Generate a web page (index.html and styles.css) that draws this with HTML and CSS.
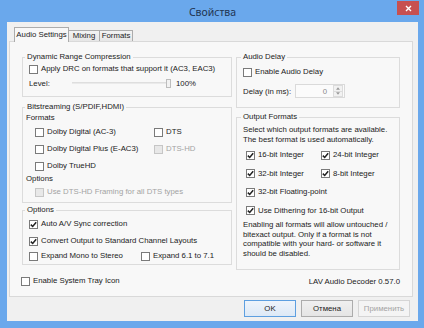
FILE: index.html
```html
<!DOCTYPE html>
<html>
<head>
<meta charset="utf-8">
<link rel="stylesheet" href="styles.css">
</head>
<body>
<div class="window">
  <div class="titlebar">
    <span class="title">Свойства</span>
    <span class="close"><svg viewBox="0 0 7 7" width="7" height="7"><path d="M1 1L6 6M6 1L1 6" stroke="#fff" stroke-width="1.4"/></svg></span>
  </div>
  <div class="client">
    <div class="tabs">
      <div class="tab active">Audio Settings</div>
      <div class="tab">Mixing</div>
      <div class="tab last">Formats</div>
    </div>
    <div class="panel">
      <div class="col">
        <div class="group drc">
          <div class="gtitle">Dynamic Range Compression</div>
          <div class="body">
            <div class="cb"><span class="box"></span><span>Apply DRC on formats that support it (AC3, EAC3)</span></div>
            <div class="level">
              <span class="level-label">Level:</span>
              <span class="slider"><span class="track"></span><span class="thumb"></span></span>
              <span class="pct">100%</span>
            </div>
          </div>
        </div>
        <div class="group bits">
          <div class="gtitle">Bitstreaming (S/PDIF,HDMI)</div>
          <div class="body">
            <div class="sub">Formats</div>
            <div class="fmt-grid">
              <div class="cb"><span class="box"></span><span>Dolby Digital (AC-3)</span></div>
              <div class="cb"><span class="box"></span><span>DTS</span></div>
              <div class="cb"><span class="box"></span><span>Dolby Digital Plus (E-AC3)</span></div>
              <div class="cb disabled"><span class="box"></span><span>DTS-HD</span></div>
              <div class="cb"><span class="box"></span><span>Dolby TrueHD</span></div>
            </div>
            <div class="sub sub-opt">Options</div>
            <div class="cb disabled framing"><span class="box"></span><span>Use DTS-HD Framing for all DTS types</span></div>
          </div>
        </div>
        <div class="group opts">
          <div class="gtitle">Options</div>
          <div class="body">
            <div class="cb"><span class="box on"><svg viewBox="0 0 7 7"><path d="M0.8 3.6L2.7 5.5L6.2 1.2" fill="none" stroke="#222" stroke-width="1.5"/></svg></span><span>Auto A/V Sync correction</span></div>
            <div class="cb convert"><span class="box on"><svg viewBox="0 0 7 7"><path d="M0.8 3.6L2.7 5.5L6.2 1.2" fill="none" stroke="#222" stroke-width="1.5"/></svg></span><span>Convert Output to Standard Channel Layouts</span></div>
            <div class="expand-row">
              <div class="cb"><span class="box"></span><span>Expand Mono to Stereo</span></div>
              <div class="cb"><span class="box"></span><span>Expand 6.1 to 7.1</span></div>
            </div>
          </div>
        </div>
      </div>
      <div class="col">
        <div class="group delay">
          <div class="gtitle">Audio Delay</div>
          <div class="body">
            <div class="cb"><span class="box"></span><span>Enable Audio Delay</span></div>
            <div class="delay-row">
              <span class="delay-label">Delay (in ms):</span>
              <span class="spin"><span class="spin-val">0</span><span class="spin-btns"><span class="spin-btn"><svg viewBox="0 0 5 3" width="5" height="3"><path d="M0 3L2.5 0L5 3Z" fill="#9a9a9a"/></svg></span><span class="spin-btn"><svg viewBox="0 0 5 3" width="5" height="3"><path d="M0 0L2.5 3L5 0Z" fill="#9a9a9a"/></svg></span></span></span>
            </div>
          </div>
        </div>
        <div class="group outfmt">
          <div class="gtitle">Output Formats</div>
          <div class="body">
            <div class="text">Select which output formats are available.<br>The best format is used automatically.</div>
            <div class="out-grid">
              <div class="cb"><span class="box on"><svg viewBox="0 0 7 7"><path d="M0.8 3.6L2.7 5.5L6.2 1.2" fill="none" stroke="#222" stroke-width="1.5"/></svg></span><span>16-bit Integer</span></div>
              <div class="cb"><span class="box on"><svg viewBox="0 0 7 7"><path d="M0.8 3.6L2.7 5.5L6.2 1.2" fill="none" stroke="#222" stroke-width="1.5"/></svg></span><span>24-bit Integer</span></div>
              <div class="cb"><span class="box on"><svg viewBox="0 0 7 7"><path d="M0.8 3.6L2.7 5.5L6.2 1.2" fill="none" stroke="#222" stroke-width="1.5"/></svg></span><span>32-bit Integer</span></div>
              <div class="cb"><span class="box on"><svg viewBox="0 0 7 7"><path d="M0.8 3.6L2.7 5.5L6.2 1.2" fill="none" stroke="#222" stroke-width="1.5"/></svg></span><span>8-bit Integer</span></div>
              <div class="cb"><span class="box on"><svg viewBox="0 0 7 7"><path d="M0.8 3.6L2.7 5.5L6.2 1.2" fill="none" stroke="#222" stroke-width="1.5"/></svg></span><span>32-bit Floating-point</span></div>
              <div class="cb span2"><span class="box on"><svg viewBox="0 0 7 7"><path d="M0.8 3.6L2.7 5.5L6.2 1.2" fill="none" stroke="#222" stroke-width="1.5"/></svg></span><span>Use Dithering for 16-bit Output</span></div>
            </div>
            <div class="text note">Enabling all formats will allow untouched /<br>bitexact output. Only if a format is not<br>compatible with your hard- or software it<br>should be disabled.</div>
          </div>
        </div>
      </div>
      <div class="bottom-row">
        <div class="cb tray"><span class="box"></span><span>Enable System Tray Icon</span></div>
        <span class="version">LAV Audio Decoder 0.57.0</span>
      </div>
    </div>
    <div class="buttons">
      <span class="btn default">OK</span>
      <span class="btn">Отмена</span>
      <span class="btn disabled">Применить</span>
    </div>
  </div>
</div>
</body>
</html>
```
FILE: styles.css
```css
* { box-sizing: border-box; }
html, body { margin: 0; padding: 0; }
body {
  width: 424px;
  height: 328px;
  overflow: hidden;
  font-family: "Liberation Sans", Arial, sans-serif;
  font-size: 7.8px;
  color: #222;
}
.window {
  width: 424px;
  height: 328px;
  background: #6aa8ec;
  padding: 0 6px 7px 7px;
  display: flex;
  flex-direction: column;
}
.titlebar {
  height: 22px;
  flex: none;
  display: grid;
  grid-template-columns: 1fr auto 1fr;
  align-items: start;
}
.title {
  grid-column: 2;
  font-family: "Noto Sans", "Open Sans", sans-serif;
  font-size: 10.5px;
  line-height: 14px;
  margin-top: 5px;
  color: #1f3552;
}
.close {
  grid-column: 3;
  justify-self: end;
  width: 22px;
  height: 14px;
  margin-top: 1px;
  margin-right: -1px;
  background: #c75050;
  display: flex;
  align-items: center;
  justify-content: center;
}
.client {
  flex: 1;
  background: #f0f0f0;
  padding: 5px 5px 0 2px;
  display: flex;
  flex-direction: column;
}
.tabs {
  display: flex;
  align-items: flex-end;
  height: 14px;
  margin-left: 5px;
}
.tab {
  height: 11px;
  line-height: 10px;
  border: 1px solid #acacac;
  border-bottom: none;
  border-left: none;
  background: linear-gradient(#f3f3f3, #e6e6e6);
  text-align: center;
}
.tab:nth-child(2) { width: 31px; }
.tab.last { width: 33px; }
.tab.active {
  width: 55px;
  height: 15px;
  margin-bottom: -1px;
  border-left: 1px solid #acacac;
  background: #f8f8f8;
  padding-top: 2px;
  position: relative;
  z-index: 1;
}
.panel {
  height: 256px;
  flex: none;
  background: #f8f8f8;
  border: 1px solid #d9d9d9;
  padding: 15px 12px 0 12px;
  display: grid;
  grid-template-columns: 210px 164px;
  column-gap: 4px;
  align-content: start;
}
.col {
  display: flex;
  flex-direction: column;
}
.group {
  border: 1px solid #dcdcdc;
}
.gtitle {
  width: fit-content;
  margin: -6px 0 0 2px;
  padding: 0 2px;
  height: 10px;
  line-height: 10px;
  background: #f8f8f8;
}
.delay .gtitle, .outfmt .gtitle { margin-left: 4px; }
.cb {
  display: flex;
  align-items: center;
  height: 10px;
  line-height: 10px;
  white-space: nowrap;
}
.box {
  width: 9px;
  height: 9px;
  flex: none;
  border: 1px solid #7a7a7a;
  background: #fff;
  margin-right: 3px;
  display: flex;
  align-items: center;
  justify-content: center;
}
.box svg { width: 7px; height: 7px; display: block; }
.cb.disabled { color: #a3a3a3; }
.cb.disabled .box { border-color: #c6c6c6; background: #e8e8e8; }

.drc .body { padding: 2px 0 8px 6px; }
.level {
  display: flex;
  align-items: center;
  height: 10px;
  margin-top: 4px;
}
.level-label { width: 43px; }
.slider {
  width: 99px;
  display: flex;
  align-items: center;
}
.track {
  flex: 1;
  height: 2px;
  background: #dedede;
  border-bottom: 1px solid #eaeaea;
}
.thumb {
  width: 5px;
  height: 9px;
  border: 1px solid #bdbdbd;
  background: #f2f2f2;
}
.pct { margin-left: 5px; }

.bits { margin-top: 10px; }
.bits .body { padding: 1px 0 5px 3px; }
.sub { height: 10px; line-height: 10px; }
.fmt-grid {
  display: grid;
  grid-template-columns: 119px auto;
  row-gap: 7px;
  margin: 4px 0 0 9px;
}
.sub-opt { margin-top: 3px; }
.framing { margin: 3px 0 0 9px; }

.opts { margin-top: 7px; }
.opts .body { padding: 4px 0 3px 6px; }
.convert { margin-top: 7px; }
.expand-row {
  display: grid;
  grid-template-columns: 112px auto;
  margin-top: 5px;
}

.delay .body { padding: 5px 0 9px 6px; }
.delay-row {
  display: flex;
  align-items: center;
  height: 14px;
  margin-top: 7px;
}
.delay-label { width: 52px; }
.spin {
  width: 50px;
  height: 14px;
  border: 1px solid #dadada;
  background: #fbfbfb;
  display: flex;
  align-items: center;
  color: #8a8a8a;
}
.spin-val { flex: 1; text-align: right; padding-right: 6px; }
.spin-btns {
  width: 10px;
  height: 12px;
  margin-right: 1px;
  display: flex;
  flex-direction: column;
  border: 1px solid #dcdcdc;
  background: #f2f2f2;
}
.spin-btn {
  flex: 1;
  display: flex;
  align-items: center;
  justify-content: center;
}
.spin-btn svg { display: block; width: 4px; height: 3px; }
.spin-btn:first-child { border-bottom: 1px solid #dcdcdc; }

.outfmt { margin-top: 9px; }
.outfmt .body { padding: 3px 0 11px 6px; }
.text { line-height: 9.5px; white-space: nowrap; }
.out-grid {
  display: grid;
  grid-template-columns: 75px auto;
  row-gap: 8.67px;
  margin: 6px 0 0 3px;
}
.span2 { grid-column: 1 / -1; }
.note { margin-top: 4.5px; }

.bottom-row {
  grid-column: 1 / -1;
  display: flex;
  justify-content: space-between;
  align-items: center;
  height: 10px;
  margin-top: 6px;
}
.tray { margin-left: -1px; }
.version { line-height: 10px; margin-top: 1px; }

.buttons {
  display: flex;
  justify-content: flex-end;
  gap: 5px;
  margin: 3px 3px 0 0;
}
.btn {
  width: 52px;
  height: 17px;
  border: 1px solid #acacac;
  background: linear-gradient(#f0f0f0, #e5e5e5);
  display: flex;
  align-items: center;
  justify-content: center;
}
.btn.default { border-color: #5d9fe0; background: linear-gradient(#eef4fb, #dde9f6); }
.btn.disabled { border-color: #d5d5d5; background: #f4f4f4; color: #a3a3a3; }
```
